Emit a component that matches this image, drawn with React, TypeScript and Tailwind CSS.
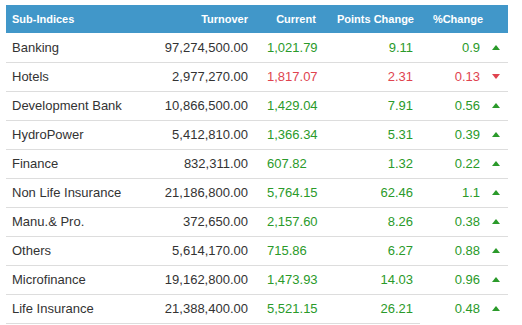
import React from 'react';

type Row = {
  name: string;
  turnover: string;
  current: string;
  points: string;
  pct: string;
  up: boolean;
};

const rows: Row[] = [
  { name: 'Banking', turnover: '97,274,500.00', current: '1,021.79', points: '9.11', pct: '0.9', up: true },
  { name: 'Hotels', turnover: '2,977,270.00', current: '1,817.07', points: '2.31', pct: '0.13', up: false },
  { name: 'Development Bank', turnover: '10,866,500.00', current: '1,429.04', points: '7.91', pct: '0.56', up: true },
  { name: 'HydroPower', turnover: '5,412,810.00', current: '1,366.34', points: '5.31', pct: '0.39', up: true },
  { name: 'Finance', turnover: '832,311.00', current: '607.82', points: '1.32', pct: '0.22', up: true },
  { name: 'Non Life Insurance', turnover: '21,186,800.00', current: '5,764.15', points: '62.46', pct: '1.1', up: true },
  { name: 'Manu.& Pro.', turnover: '372,650.00', current: '2,157.60', points: '8.26', pct: '0.38', up: true },
  { name: 'Others', turnover: '5,614,170.00', current: '715.86', points: '6.27', pct: '0.88', up: true },
  { name: 'Microfinance', turnover: '19,162,800.00', current: '1,473.93', points: '14.03', pct: '0.96', up: true },
  { name: 'Life Insurance', turnover: '21,388,400.00', current: '5,521.15', points: '26.21', pct: '0.48', up: true },
];

function Arrow({ up }: { up: boolean }) {
  return (
    <svg width="8" height="5" viewBox="0 0 8 5" className="mx-auto block">
      {up ? <path d="M4 0 L8 5 L0 5 Z" fill="#2a9a2a" /> : <path d="M0 0 L8 0 L4 5 Z" fill="#e0434f" />}
    </svg>
  );
}

export default function App() {
  return (
    <div className="w-[522px] h-[325px] bg-white pt-[5px] pl-[6px] font-['Liberation_Sans',Arial,sans-serif] overflow-hidden">
      <table className="table-fixed border-collapse w-[502px]">
        <colgroup>
          <col className="w-[150px]" />
          <col className="w-[100px]" />
          <col className="w-[80px]" />
          <col className="w-[84px]" />
          <col className="w-[64px]" />
          <col className="w-[24px]" />
        </colgroup>
        <thead>
          <tr className="bg-[#4197c9] text-white text-[11px] font-bold h-[28px]">
            <th className="text-left pl-[6px] font-bold">Sub-Indices</th>
            <th className="text-right pr-[8px] font-bold">Turnover</th>
            <th className="text-center font-bold">Current</th>
            <th className="text-right pr-[6px] font-bold">Points Change</th>
            <th className="text-right pr-[1px] font-bold">%Change</th>
            <th />
          </tr>
        </thead>
        <tbody>
          {rows.map((r, i) => {
            const last = i === rows.length - 1;
            const color = r.up ? 'text-[#2a9a2a]' : 'text-[#e0434f]';
            const b = 'border-b border-[#dddddd]';
            const bEnd = last ? '' : b;
            return (
              <tr key={r.name} className="h-[29px] text-[13px]">
                <td className={`pl-[6px] text-[#333333] ${b}`}>{r.name}</td>
                <td className={`pr-[8px] text-right text-[#333333] ${b}`}>{r.turnover}</td>
                <td className={`pl-[11px] ${color} ${b}`}>{r.current}</td>
                <td className={`pr-[7px] text-right ${color} ${b}`}>{r.points}</td>
                <td className={`pr-[4px] text-right ${color} ${bEnd}`}>{r.pct}</td>
                <td className={bEnd}>
                  <Arrow up={r.up} />
                </td>
              </tr>
            );
          })}
        </tbody>
      </table>
    </div>
  );
}
